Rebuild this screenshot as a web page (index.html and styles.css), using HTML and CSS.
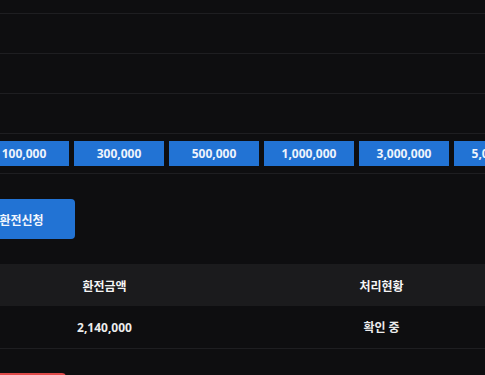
FILE: index.html
```html
<!DOCTYPE html>
<html lang="ko">

<head>
  <meta charset="UTF-8">
  <meta name="viewport" content="width=device-width, initial-scale=1.0">
  <title>환전신청</title>
  <link rel="stylesheet" href="styles.css">
</head>

<body>
  <div class="page">
    <div class="form-row top"></div>
    <div class="form-row"></div>
    <div class="form-row"></div>
    <div class="form-row"></div>

    <div class="form-row amounts">
      <button class="amount">100,000</button>
      <button class="amount">300,000</button>
      <button class="amount">500,000</button>
      <button class="amount">1,000,000</button>
      <button class="amount">3,000,000</button>
      <button class="amount">5,000,000</button>
    </div>

    <button class="submit">환전신청</button>

    <table class="history">
      <thead>
        <tr>
          <th>환전금액</th>
          <th>처리현황</th>
        </tr>
      </thead>
      <tbody>
        <tr>
          <td>2,140,000</td>
          <td>확인 중</td>
        </tr>
      </tbody>
    </table>

    <button class="delete"></button>
  </div>
</body>

</html>
```

FILE: styles.css
```css
html, body {
  margin: 0;
  padding: 0;
  background-color: #0e0e10;
  overflow: hidden;
}

body {
  font-family: "Noto Sans", "Noto Sans CJK KR", sans-serif;
  color: #f2f2f2;
  width: 485px;
  height: 375px;
}

.page {
  margin-left: -34px;
  width: 554px;
}

.form-row {
  height: 39px;
  border-bottom: 1px solid #1e1e21;
}

.form-row.top {
  height: 13px;
}

.amounts {
  display: flex;
  gap: 5px;
  padding: 7px 0 0 13px;
  height: 32px;
  box-sizing: content-box;
}

.amount {
  flex: 0 0 90px;
  height: 25px;
  border: none;
  background-color: #2273d4;
  color: #eef4fc;
  font-family: inherit;
  font-size: 12px;
  font-weight: 700;
  padding: 0;
}

.submit {
  display: block;
  margin: 25px 0 0 2px;
  width: 107px;
  height: 40px;
  border: none;
  border-radius: 4px;
  background-color: #2273d4;
  color: #f2f6fc;
  font-family: "Noto Sans CJK KR", sans-serif;
  font-size: 12px;
  font-weight: 700;
  padding: 0;
}

.history {
  margin-top: 25px;
  width: 554px;
  border-collapse: collapse;
  table-layout: fixed;
}

.history th,
.history td {
  text-align: center;
  font-size: 12px;
  font-weight: 700;
  padding: 0;
}

.history th {
  height: 42px;
  background-color: #1b1b1d;
  color: #f5f5f5;
  font-family: "Noto Sans CJK KR", sans-serif;
}

.history td {
  height: 42px;
  border-bottom: 1px solid #1e1e21;
  color: #ececec;
}

.delete {
  display: block;
  margin: 24px 0 0 0;
  width: 100px;
  height: 20px;
  border: none;
  border-radius: 4px;
  background-color: #e04a4a;
}
```
